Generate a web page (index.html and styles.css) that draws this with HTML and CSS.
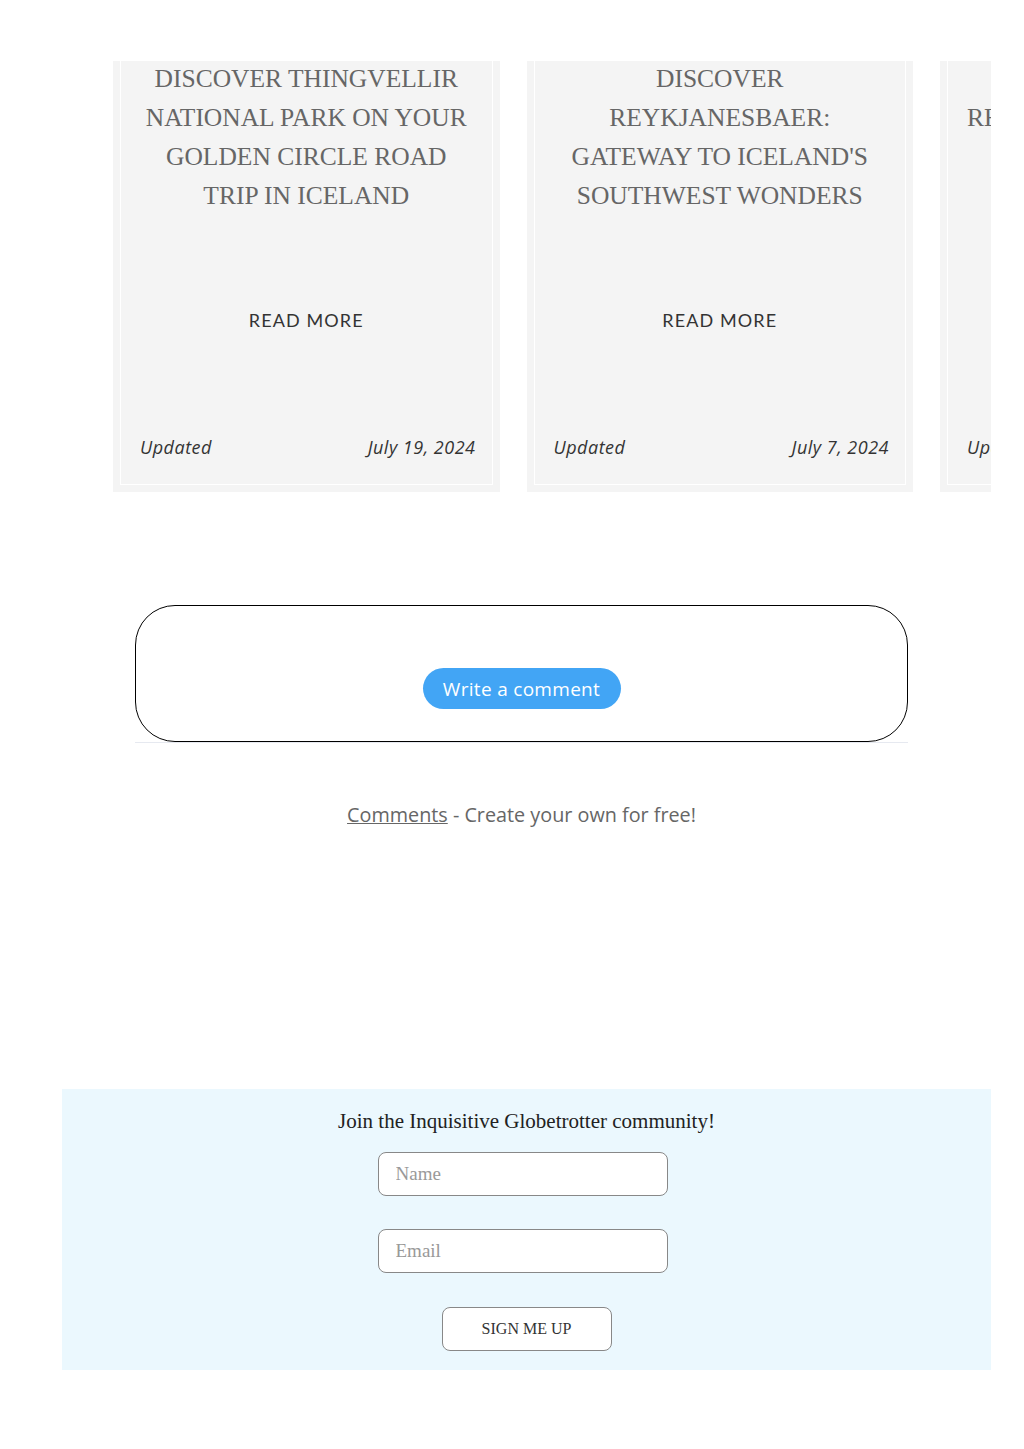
FILE: index.html
```html
<!DOCTYPE html>
<html lang="en">
<head>
<meta charset="utf-8"/>
<meta content="width=device-width, initial-scale=1.0" name="viewport"/>
<title>The Inquisitive Globetrotter</title>
<link rel="stylesheet" href="styles.css">
</head>
<body>

<div class="posts">
  <div class="card">
    <div class="card-inner">
      <h2 class="card-title">DISCOVER THINGVELLIR NATIONAL PARK ON YOUR GOLDEN CIRCLE ROAD TRIP IN ICELAND</h2>
      <a class="read-more" href="#">READ MORE</a>
      <div class="card-foot"><span>Updated</span><span>July 19, 2024</span></div>
    </div>
  </div>
  <div class="card">
    <div class="card-inner">
      <h2 class="card-title">DISCOVER<br/>REYKJANESBAER:<br/>GATEWAY TO ICELAND'S SOUTHWEST WONDERS</h2>
      <a class="read-more" href="#">READ MORE</a>
      <div class="card-foot"><span>Updated</span><span>July 7, 2024</span></div>
    </div>
  </div>
  <div class="card">
    <div class="card-inner">
      <h2 class="card-title">&nbsp;<br/>REYKJAVIK'S OLD HARBOUR</h2>
      <a class="read-more" href="#">READ MORE</a>
      <div class="card-foot"><span>Updated</span><span>June 30, 2024</span></div>
    </div>
  </div>
</div>

<div class="comments">
  <div class="comment-line">
    <div class="comment-box">
      <button class="comment-btn">Write a comment</button>
    </div>
  </div>
  <p class="comment-note"><a href="#">Comments</a> - Create your own for free!</p>
</div>

<div class="signup">
  <p class="signup-title">Join the Inquisitive Globetrotter community!</p>
  <input class="signup-field" type="text" placeholder="Name"/>
  <input class="signup-field" type="email" placeholder="Email"/>
  <button class="signup-btn">SIGN ME UP</button>
</div>

</body>
</html>
```

FILE: styles.css
```css
body {
  margin: 0;
  background: #fff;
  font-family: "Open Sans", sans-serif;
}

/* post cards */
.posts {
  display: flex;
  gap: 27px;
  margin: 61px 33px 0 113px;
  overflow: hidden;
}
.card {
  flex: 0 0 386.5px;
  height: 431px;
  box-sizing: border-box;
  padding: 0 7px 7px;
  background: #f4f4f4;
}
.card-inner {
  display: flex;
  flex-direction: column;
  height: 100%;
  box-sizing: border-box;
  border: 1px solid #fff;
  border-top: none;
  overflow: hidden;
}
.card-title {
  margin: -2px 16px 0;
  font-family: "Liberation Serif", serif;
  font-weight: normal;
  font-size: 25.5px;
  line-height: 39px;
  color: #666;
  text-align: center;
  white-space: normal;
}
.card:last-child .card-title {
  text-align: left;
  white-space: nowrap;
  margin-left: 19px;
}
.read-more {
  margin-top: 93px;
  font-family: "Lato", sans-serif;
  font-size: 18px;
  line-height: 24px;
  letter-spacing: 1.1px;
  color: #333;
  text-align: center;
  text-decoration: none;
}
.card-foot {
  display: flex;
  justify-content: space-between;
  margin-top: auto;
  padding: 0 16px 25px 19px;
  font-family: "Open Sans", sans-serif;
  font-style: italic;
  font-size: 18px;
  letter-spacing: 0.5px;
  line-height: 24px;
  color: #333;
}

/* comments */
.comments {
  width: 773px;
  margin: 113px 0 0 135px;
}
.comment-line {
  border-bottom: 1px solid #e6e9f0;
}
.comment-box {
  display: flex;
  justify-content: center;
  height: 137px;
  box-sizing: border-box;
  padding-top: 62px;
  border: 1px solid #000;
  border-radius: 40px;
}
.comment-btn {
  width: 198px;
  height: 41px;
  border: none;
  border-radius: 21px;
  background: #42a5f5;
  color: #fff;
  font-family: "Open Sans", sans-serif;
  font-size: 19px;
  letter-spacing: 0.3px;
}
.comment-note {
  margin: 59px 0 0;
  font-family: "Open Sans", sans-serif;
  font-size: 19.8px;
  line-height: 26px;
  color: #666;
  text-align: center;
}
.comment-note a {
  color: #666;
}

/* newsletter */
.signup {
  display: flex;
  flex-direction: column;
  align-items: center;
  width: 929px;
  height: 281px;
  box-sizing: border-box;
  margin: 261px 0 0 62px;
  padding-top: 20px;
  background: #ebf8fe;
}
.signup-title {
  margin: 0 0 19px;
  font-family: "Liberation Serif", serif;
  font-size: 21px;
  line-height: 24px;
  color: #222;
}
.signup-field {
  width: 290px;
  height: 44px;
  box-sizing: border-box;
  margin: 0 8px 33px 0;
  padding: 0 17px;
  border: 1px solid #888;
  border-radius: 8px;
  background: #fff;
  font-family: "Liberation Serif", serif;
  font-size: 19px;
  color: #333;
}
.signup-field::placeholder {
  color: #999;
}
.signup-btn {
  width: 170px;
  height: 44px;
  margin-top: 1px;
  border: 1px solid #888;
  border-radius: 8px;
  background: #fff;
  font-family: "Liberation Serif", serif;
  font-size: 16px;
  color: #333;
}
```
